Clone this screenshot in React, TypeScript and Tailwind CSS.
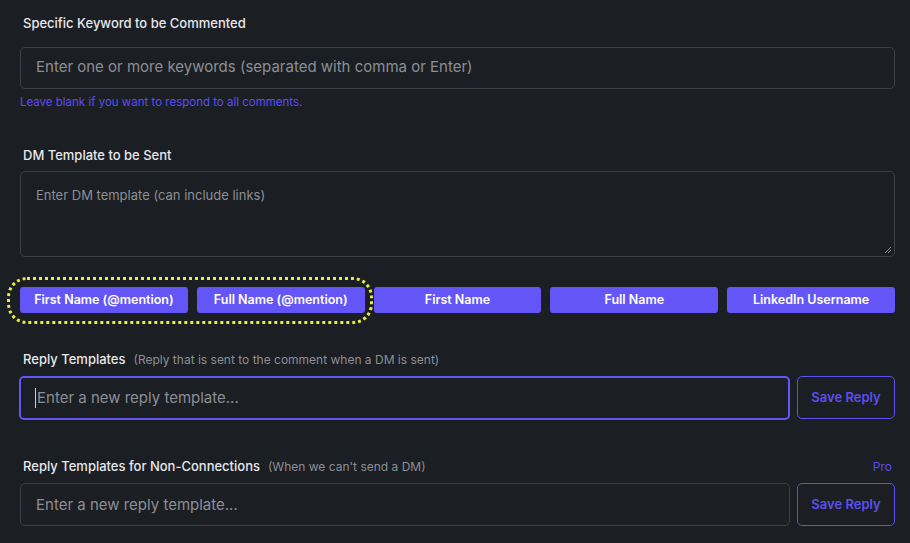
import React from "react";

const VARS = ["First Name (@mention)", "Full Name (@mention)", "First Name", "Full Name", "LinkedIn Username"];

function Label({ children, note }: { children: React.ReactNode; note?: string }) {
  return (
    <div className="flex items-baseline gap-2 pl-[3px] text-[13px] font-medium text-[#e6e8ec]">
      <span>{children}</span>
      {note && <span className="text-[12px] font-normal text-[#8b8f96]">{note}</span>}
    </div>
  );
}

function ReplyRow({ focused }: { focused?: boolean }) {
  return (
    <div className="flex gap-[7px]">
      <div
        className={
          focused
            ? "flex h-[44px] flex-1 items-center rounded-[5px] border-2 border-[#6356f5] px-[14px]"
            : "flex h-[43px] flex-1 items-center rounded-[5px] border border-[#3c3f45] px-[15px]"
        }
      >
        {focused && <span className="mr-px h-[20px] w-px bg-[#c9ccd2]" />}
        <span className="text-[15px] text-[#8b8f96]">Enter a new reply template...</span>
      </div>
      <button className="h-[43px] w-[98px] rounded-[5px] border border-[#5c4ff0] text-[13px] font-semibold text-[#5c4ff0]">
        Save Reply
      </button>
    </div>
  );
}

export default function App() {
  return (
    <div
      className="min-h-[543px] w-full bg-[#1b1e22] px-[20px] pt-[14px] pr-[15px]"
      style={{ fontFamily: "Inter, 'Noto Sans', sans-serif" }}
    >
      <Label>Specific Keyword to be Commented</Label>
      <div className="mt-[13px] flex h-[42px] items-center rounded-[5px] border border-[#3c3f45] px-[15px]">
        <span className="text-[15px] text-[#8b8f96]">Enter one or more keywords (separated with comma or Enter)</span>
      </div>
      <div className="mt-[5px] text-[11.5px] text-[#5b4ef0]">Leave blank if you want to respond to all comments.</div>

      <div className="mt-[35px]">
        <Label>DM Template to be Sent</Label>
      </div>
      <div className="relative mt-[6px] h-[86px] rounded-[5px] border border-[#3c3f45] px-[15px] pt-[10px]">
        <span className="text-[13px] text-[#8b8f96]">Enter DM template (can include links)</span>
        <svg className="absolute right-[2px] bottom-[2px]" width="8" height="8" viewBox="0 0 8 8">
          <path d="M7 1 L1 7 M7 4 L4 7" stroke="#8b8f96" strokeWidth="1" />
        </svg>
      </div>

      <div className="relative mt-[30px] grid grid-cols-5 gap-[9px]">
        <div className="pointer-events-none absolute top-[-10px] left-[-13px] h-[47px] w-[366px] rounded-[20px] border-[3px] border-dotted border-[#e4f03c]" />
        {VARS.map((v) => (
          <button
            key={v}
            className="h-[26px] rounded-[3px] bg-[#6456f6] text-[12.5px] font-semibold text-white"
          >
            {v}
          </button>
        ))}
      </div>

      <div className="mt-[37px]">
        <Label note="(Reply that is sent to the comment when a DM is sent)">Reply Templates</Label>
      </div>
      <div className="mt-[6px] -ml-px">
        <ReplyRow focused />
      </div>

      <div className="mt-[37px] flex items-baseline justify-between">
        <Label note="(When we can't send a DM)">Reply Templates for Non-Connections</Label>
        <span className="mr-[3px] text-[12px] text-[#5c4ff0]">Pro</span>
      </div>
      <div className="mt-[7px]">
        <ReplyRow />
      </div>
    </div>
  );
}
